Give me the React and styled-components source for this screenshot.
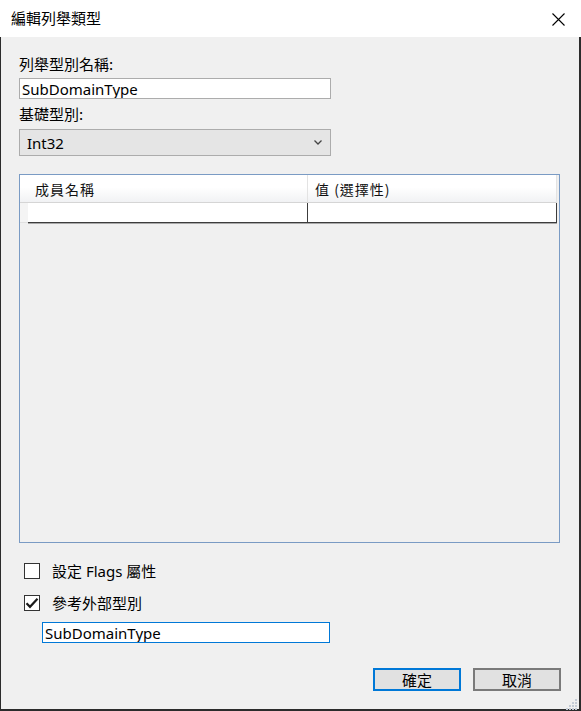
import React from 'react';
import styled, { createGlobalStyle } from 'styled-components';

const FONT = '"Noto Sans", "Noto Sans CJK TC", sans-serif';

const GlobalStyle = createGlobalStyle`
    html, body {
        margin: 0;
        padding: 0;
        background: #ffffff;
    }
    body {
        font-family: ${FONT};
        font-size: 15px;
        color: #000;
    }
`;

// Check mark for the checkbox
const CheckMark = () => (
    <svg width="14" height="14" viewBox="0 0 14 14">
        <path d="M1.5 7.2 L5 10.8 L12.5 2.8" fill="none" stroke="#1a1a1a" strokeWidth="2.2" />
    </svg>
);

const CloseIcon = () => (
    <svg width="13" height="13" viewBox="0 0 13 13">
        <path d="M0.5 0.5 L12.5 12.5 M12.5 0.5 L0.5 12.5" stroke="#000" strokeWidth="1.1" />
    </svg>
);

const Chevron = () => (
    <svg width="8" height="5" viewBox="0 0 8 5">
        <path d="M0.5 0.5 L4 4 L7.5 0.5" fill="none" stroke="#444" strokeWidth="1.3" />
    </svg>
);

const Grip = () => {
    const dots = [
        [10, 0],
        [7, 3], [10, 3],
        [4, 6], [7, 6], [10, 6],
        [1, 9], [4, 9], [7, 9], [10, 9],
    ];
    return (
        <svg width="13" height="13" viewBox="0 0 13 13">
            {dots.map(([x, y], i) => (
                <rect key={`grip-${i}`} x={x} y={y + 1} width="2" height="2" fill="#c5ccd6" />
            ))}
        </svg>
    );
};

export default function App() {
    return (
        <Frame>
            <GlobalStyle />
            <TitleBar>
                <Title>編輯列舉類型</Title>
                <CloseButton><CloseIcon /></CloseButton>
            </TitleBar>
            <Body>
                <FieldLabel>列舉型別名稱:</FieldLabel>
                <TextBox defaultValue="SubDomainType" />
                <FieldLabel $spaced>基礎型別:</FieldLabel>
                <Combo>
                    <span>Int32</span>
                    <Chevron />
                </Combo>

                <GridBox>
                    <Table>
                        <HeaderCell $corner />
                        <HeaderCell>成員名稱</HeaderCell>
                        <HeaderCell>值 (選擇性)</HeaderCell>
                        <RowHead />
                        <DataCell />
                        <DataCell />
                    </Table>
                </GridBox>

                <CheckRow>
                    <CheckBox />
                    <CheckLabel>設定 Flags 屬性</CheckLabel>
                </CheckRow>
                <CheckRow $second>
                    <CheckBox><CheckMark /></CheckBox>
                    <CheckLabel>參考外部型別</CheckLabel>
                </CheckRow>
                <TextBox $focused $indent defaultValue="SubDomainType" />

                <ButtonBar>
                    <DialogButton $primary>確定</DialogButton>
                    <DialogButton>取消</DialogButton>
                </ButtonBar>
                <GripCorner><Grip /></GripCorner>
            </Body>
        </Frame>
    );
}

const Frame = styled.div`
    width: 581px;
    height: 711px;
    display: flex;
    flex-direction: column;
    box-sizing: border-box;
`;

const TitleBar = styled.div`
    height: 37px;
    flex: none;
    background: #ffffff;
    display: flex;
    align-items: center;
    justify-content: space-between;
    padding: 0 16px 0 11px;
`;

const Title = styled.div`
    font-family: "Noto Sans CJK TC", sans-serif;
    font-size: 15px;
    line-height: 20px;
    margin-top: -1px;
`;

const CloseButton = styled.div`
    width: 13px;
    height: 13px;
    display: flex;
    margin-top: 1px;
`;

const Body = styled.div`
    position: relative;
    flex: 1;
    background: #f0f0f0;
    border-left: 1px solid #2b2b2b;
    border-right: 2px solid #2b2b2b;
    border-bottom: 2px solid #2b2b2b;
    padding: 17px 18px 0 18px;
    display: flex;
    flex-direction: column;
    align-items: flex-start;
`;

const FieldLabel = styled.div`
    font-family: "Noto Sans CJK TC", sans-serif;
    font-size: 15px;
    line-height: 20px;
    height: 20px;
    margin-top: ${props => props.$spaced ? '5px' : '0'};
    margin-bottom: 4px;
`;

const TextBox = styled.input`
    width: ${props => props.$indent ? '288px' : '312px'};
    height: 21px;
    box-sizing: border-box;
    margin: ${props => props.$indent ? '9px 0 0 23px' : '0'};
    padding: 0 2px;
    border: 1px solid ${props => props.$focused ? '#0078d7' : '#acacac'};
    background: #ffffff;
    font-family: ${FONT};
    font-size: 15px;
    color: #000;
    outline: none;
`;

const Combo = styled.div`
    width: 312px;
    height: 27px;
    box-sizing: border-box;
    margin-top: 1px;
    border: 1px solid #acacac;
    background: #e5e5e5;
    display: flex;
    align-items: center;
    justify-content: space-between;
    padding: 0 8px 0 7px;
    font-size: 15px;
    line-height: 20px;
`;

const GridBox = styled.div`
    width: 541px;
    height: 369px;
    box-sizing: border-box;
    margin-top: 18px;
    border: 1px solid #7a9bc4;
    background: #f0f0f0;
`;

const Table = styled.div`
    display: grid;
    grid-template-columns: 8px 280px 249px;
    grid-template-rows: 28px 20px;
`;

const HeaderCell = styled.div`
    box-sizing: border-box;
    background: linear-gradient(#ffffff, #ffffff 45%, #f1f2f4);
    border-bottom: 1px solid #d5d5d5;
    border-right: ${props => props.$corner ? 'none' : '1px solid #e3e3e3'};
    display: flex;
    align-items: center;
    padding-left: 7px;
    font-family: "Noto Sans CJK TC", sans-serif;
    font-size: 14px;
    letter-spacing: 1px;
    color: #111;
`;

const RowHead = styled.div`
    background: #f4f4f4;
    border-bottom: 1px solid #e0e0e0;
`;

const DataCell = styled.div`
    box-sizing: border-box;
    background: #ffffff;
    border-right: 1px solid #3c3c3c;
    border-bottom: 1px solid #3c3c3c;
    box-shadow: 0 1px 0 #a8a8a8;
`;

const CheckRow = styled.div`
    display: flex;
    align-items: center;
    height: 20px;
    margin: ${props => props.$second ? '12px 0 0 5px' : '18px 0 0 5px'};
`;

const CheckBox = styled.div`
    width: 16px;
    height: 16px;
    box-sizing: border-box;
    border: 1px solid #333333;
    background: #ffffff;
    display: flex;
    align-items: center;
    justify-content: center;
`;

const CheckLabel = styled.span`
    margin-left: 12px;
    font-size: 15px;
    line-height: 20px;
`;

const ButtonBar = styled.div`
    align-self: flex-end;
    margin-top: 25px;
    display: flex;
    gap: 12px;
`;

const DialogButton = styled.div`
    width: 88px;
    height: 23px;
    box-sizing: border-box;
    border: ${props => props.$primary ? '2px solid #0078d7' : '2px solid #7a7a7a'};
    background: #e1e1e1;
    display: flex;
    align-items: center;
    justify-content: center;
    font-family: "Noto Sans CJK TC", sans-serif;
    font-size: 15px;
    line-height: 20px;
`;

const GripCorner = styled.div`
    position: absolute;
    right: 1px;
    bottom: 1px;
    width: 13px;
    height: 13px;
`;
